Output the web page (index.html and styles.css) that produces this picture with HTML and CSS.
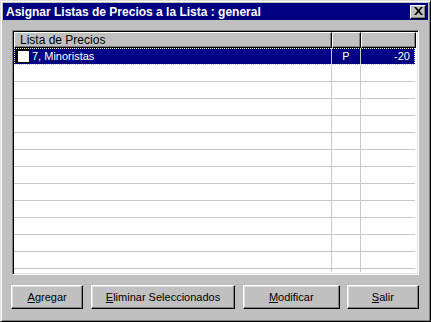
FILE: index.html
```html
<!DOCTYPE html>
<html lang="es">
<head>
    <meta charset="UTF-8">
    <title>Asignar Listas de Precios</title>
    <link rel="stylesheet" href="styles.css">
</head>
<body>
    <div class="window">
        <div class="title-bar">
            <span class="title-text">Asignar Listas de Precios a la Lista : general</span>
            <button class="close-btn" aria-label="Cerrar">
                <svg width="9" height="8" viewBox="0 0 9 8">
                    <path d="M0 0h2.2l2.3 2.8L6.8 0H9L5.6 4 9 8H6.8L4.5 5.2 2.2 8H0l3.4-4z" fill="#000"/>
                </svg>
            </button>
        </div>

        <div class="dialog-body">
            <!-- lista de precios asignadas -->
            <div class="list-box">
                <div class="list-header">
                    <div class="head-cell">Lista de Precios</div>
                    <div class="head-cell"></div>
                    <div class="head-cell"></div>
                </div>
                <div class="list-rows">
                    <div class="row selected">
                        <div class="cell name-cell"><span class="check"></span>7, Minoristas</div>
                        <div class="cell center">P</div>
                        <div class="cell right">-20</div>
                    </div>
                    <div class="row"><div class="cell"></div><div class="cell"></div><div class="cell"></div></div>
                    <div class="row"><div class="cell"></div><div class="cell"></div><div class="cell"></div></div>
                    <div class="row"><div class="cell"></div><div class="cell"></div><div class="cell"></div></div>
                    <div class="row"><div class="cell"></div><div class="cell"></div><div class="cell"></div></div>
                    <div class="row"><div class="cell"></div><div class="cell"></div><div class="cell"></div></div>
                    <div class="row"><div class="cell"></div><div class="cell"></div><div class="cell"></div></div>
                    <div class="row"><div class="cell"></div><div class="cell"></div><div class="cell"></div></div>
                    <div class="row"><div class="cell"></div><div class="cell"></div><div class="cell"></div></div>
                    <div class="row"><div class="cell"></div><div class="cell"></div><div class="cell"></div></div>
                    <div class="row"><div class="cell"></div><div class="cell"></div><div class="cell"></div></div>
                    <div class="row"><div class="cell"></div><div class="cell"></div><div class="cell"></div></div>
                    <div class="row"><div class="cell"></div><div class="cell"></div><div class="cell"></div></div>
                    <div class="row"><div class="cell"></div><div class="cell"></div><div class="cell"></div></div>
                </div>
            </div>

            <div class="button-row">
                <button class="win-btn btn-agregar"><u>A</u>gregar</button>
                <button class="win-btn btn-eliminar"><u>E</u>liminar Seleccionados</button>
                <button class="win-btn btn-modificar"><u>M</u>odificar</button>
                <button class="win-btn btn-salir"><u>S</u>alir</button>
            </div>
        </div>
    </div>
</body>
</html>
```

FILE: styles.css
```css
:root {
    --face: #c0c0c0;
    --light: #dfdfdf;
    --shadow: #808080;
    --navy: #000080;
    --grid: #c8c8c8;
}

* {
    box-sizing: border-box;
    margin: 0;
    padding: 0;
}

body {
    font-family: 'Liberation Sans', Arial, sans-serif;
    font-size: 11px;
    color: #000;
    background-color: var(--face);
}

.window {
    width: 431px;
    height: 322px;
    background-color: var(--face);
    border: 1px solid;
    border-color: var(--light) #000 #000 var(--light);
    box-shadow: inset 1px 1px #fff, inset -1px -1px var(--shadow);
    padding: 2px;
    display: flex;
    flex-direction: column;
}

/* barra de título */
.title-bar {
    height: 18px;
    background-color: var(--navy);
    color: #fff;
    display: flex;
    align-items: center;
    justify-content: space-between;
    padding: 0 2px 0 3px;
}

.title-text {
    font-weight: bold;
    font-size: 12px;
}

.close-btn {
    width: 16px;
    height: 14px;
    background-color: var(--face);
    border: 1px solid;
    border-color: #fff #000 #000 #fff;
    box-shadow: inset -1px -1px var(--shadow);
    display: flex;
    align-items: center;
    justify-content: center;
    padding: 0 0 1px 0;
}

.dialog-body {
    flex-grow: 1;
    display: flex;
    flex-direction: column;
    padding: 10px 9px 10px 8px;
}

/* lista */
.list-box {
    margin-left: 1px;
    height: 245px;
    border: 1px solid;
    border-color: var(--shadow) #fff #fff var(--shadow);
    box-shadow: inset 1px 1px #000, inset -1px -1px var(--light);
    padding: 1px 3px 2px 1px;
    background-color: #fff;
    display: flex;
    flex-direction: column;
    overflow: hidden;
}

.list-header,
.row {
    display: grid;
    grid-template-columns: 318px 29px 55px;
}

.head-cell {
    height: 16px;
    background-color: var(--face);
    border: 1px solid;
    border-color: #fff #000 #000 #fff;
    box-shadow: inset -1px -1px var(--shadow);
    padding: 0 0 0 5px;
    font-size: 12px;
    line-height: 14px;
}

.list-rows {
    flex-grow: 1;
    overflow: hidden;
}

.row {
    height: 17px;
}

.cell {
    border-right: 1px solid var(--grid);
    border-bottom: 1px solid var(--grid);
    line-height: 16px;
    padding: 0 3px;
    white-space: nowrap;
}

.row.selected {
    background-color: var(--navy);
    color: #fff;
    outline: 1px dotted #fff;
    outline-offset: -1px;
}

.name-cell {
    display: flex;
    align-items: center;
    gap: 2px;
    padding-left: 2px;
}

.check {
    display: inline-block;
    width: 14px;
    height: 14px;
    background-color: #fff;
    border: 2px solid #000;
    border-right-width: 1px;
    border-bottom-width: 1px;
    flex-shrink: 0;
}

.center {
    text-align: center;
}

.right {
    text-align: right;
    padding-right: 5px;
}

/* botones */
.button-row {
    display: flex;
    margin-top: 10px;
    gap: 8px;
}

.win-btn {
    height: 24px;
    background-color: var(--face);
    font-family: 'Liberation Sans', Arial, sans-serif;
    font-size: 11px;
    color: #000;
    border: 1px solid;
    border-color: #fff #000 #000 #fff;
    box-shadow: inset -1px -1px var(--shadow), inset 1px 1px var(--light);
    cursor: pointer;
}

.btn-agregar { width: 73px; }
.btn-eliminar { width: 145px; }
.btn-modificar { width: 98px; margin-right: -1px; }
.btn-salir { width: 73px; }
```
